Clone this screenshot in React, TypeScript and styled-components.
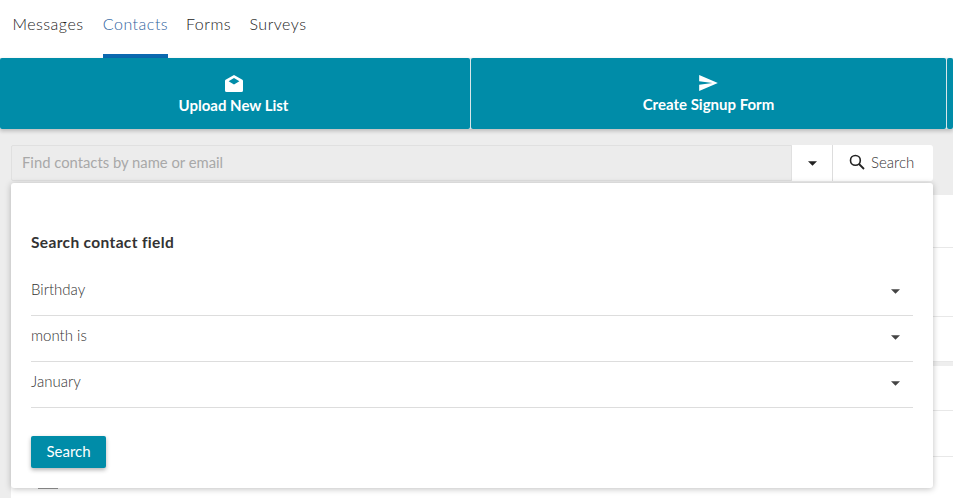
import React from 'react';
import styled, { createGlobalStyle } from 'styled-components';

const GlobalStyle = createGlobalStyle`
  html, body {
    margin: 0;
    padding: 0;
    height: 100%;
    overflow: hidden;
    background: #ededed;
  }

  * {
    box-sizing: border-box;
  }

  body {
    font-family: 'Lato', 'Noto Sans', sans-serif;
  }
`;

const tabs = [
  { label: 'Messages', width: 74 },
  { label: 'Contacts', width: 65 },
  { label: 'Forms', width: 45 },
  { label: 'Surveys', width: 58 },
];
const fields = ['Birthday', 'month is', 'January'];
const rowHeights = [53, 69, 45, 4, 45, 46, 42];

function Caret() {
  return (
    <svg width='9' height='5' viewBox='0 0 10 5'>
      <path d='M0 0h10L5 5z' fill='currentColor' />
    </svg>
  );
}

export default function App(): JSX.Element {
  return (
    <Page>
      <GlobalStyle />
      <Tabs>
        {tabs.map((tab) => (
          <Tab key={tab.label} $active={tab.label === 'Contacts'} $width={tab.width}>
            {tab.label}
          </Tab>
        ))}
      </Tabs>

      <Actions>
        <ActionCard $width={470} $inset={3}>
          <svg width='18' height='17' viewBox='0 0 18 17'>
            <path
              d='M9 0 .6 4.8Q0 5.2 0 6V15.4Q0 17 1.6 17H16.4Q18 17 18 15.4V6Q18 5.2 17.4 4.8zM9 3 14.4 6.2 9 9.6 3.6 6.2z'
              fill='#fff'
              fillRule='evenodd'
            />
          </svg>
          <ActionLabel>Upload New List</ActionLabel>
        </ActionCard>
        <ActionCard $width={475} $inset={0}>
          <svg width='19' height='16' viewBox='2 3 21 18'>
            <path d='M2.01 21 23 12 2.01 3 2 10l15 2-15 2z' fill='#fff' />
          </svg>
          <ActionLabel>Create Signup Form</ActionLabel>
        </ActionCard>
        <ActionCard $width={6} $inset={0} />
      </Actions>

      <Content>
        <SearchBar>
          <SearchInput>Find contacts by name or email</SearchInput>
          <CaretButton>
            <Caret />
          </CaretButton>
          <SearchButton>
            <svg width='16' height='16' viewBox='0 0 16 16'>
              <circle cx='6.4' cy='6.4' r='4.9' fill='none' stroke='#222' strokeWidth='1.6' />
              <path d='M10 10l5 5' stroke='#222' strokeWidth='1.8' />
            </svg>
            Search
          </SearchButton>
        </SearchBar>

        <Table>
          {rowHeights.map((height, index) => (
            <TableRow key={index} $height={height} $band={height === 4} />
          ))}
        </Table>

        <CheckboxPeek />

        <Popover>
          <PopoverTitle>Search contact field</PopoverTitle>
          {fields.map((field) => (
            <FieldSelect key={field}>
              {field}
              <FieldCaret>
                <Caret />
              </FieldCaret>
            </FieldSelect>
          ))}
          <PrimaryButton>Search</PrimaryButton>
        </Popover>
      </Content>
    </Page>
  );
}

const Page = styled.div`
  height: 498px;
  overflow: hidden;
  color: #333;
`;

const Tabs = styled.nav`
  display: flex;
  gap: 18px;
  height: 58px;
  padding-left: 11px;
  background: #fff;
`;

const Tab = styled.div<{ $active: boolean; $width: number }>`
  display: flex;
  justify-content: center;
  width: ${({ $width }) => $width}px;
  height: 58px;
  padding-top: 14px;
  font-size: 16px;
  line-height: 20px;
  font-weight: 300;
  letter-spacing: 0.5px;
  white-space: nowrap;
  color: ${({ $active }) => ($active ? '#2f64a0' : '#222')};
  border-bottom: 4px solid ${({ $active }) => ($active ? '#0b69b0' : 'transparent')};
`;

const Actions = styled.section`
  display: flex;
  gap: 1px;
  height: 71px;
  box-shadow: 0 2px 4px rgba(0, 0, 0, 0.22);
  background: #d7e6ea;
  position: relative;
`;

const ActionCard = styled.div<{ $width: number; $inset: number }>`
  display: flex;
  flex-direction: column;
  align-items: center;
  width: ${({ $width }) => $width}px;
  padding: 17px ${({ $inset }) => $inset}px 0 0;
  background: #008ca8;
  border-radius: 2px;
`;

const ActionLabel = styled.div`
  margin-top: 4px;
  font-size: 15px;
  line-height: 18px;
  font-weight: 700;
  color: #fff;
  white-space: nowrap;
`;

const Content = styled.main`
  position: relative;
  padding: 16px 0 0 11px;
`;

const SearchBar = styled.div`
  display: flex;
  width: 922px;
  height: 36px;
  font-size: 15px;
`;

const SearchInput = styled.div`
  flex: 1;
  display: flex;
  align-items: center;
  padding: 0 0 2px 10px;
  font-size: 14.8px;
  color: #a8a8a8;
  background: #ececec;
  border: 1px solid #e0e0e0;
  border-radius: 2px 0 0 2px;
`;

const CaretButton = styled.div`
  display: flex;
  align-items: center;
  justify-content: center;
  width: 41px;
  color: #222;
  background: #fff;
  border-right: 1px solid #ddd;
`;

const SearchButton = styled.div`
  display: flex;
  align-items: center;
  gap: 6px;
  width: 100px;
  padding: 0 0 2px 16px;
  font-weight: 300;
  color: #333;
  background: #fff;
  border-radius: 0 3px 3px 0;
`;

const Table = styled.div`
  margin-top: 14px;
  height: 303px;
  background: #fff;
`;

const TableRow = styled.div<{ $height: number; $band: boolean }>`
  height: ${({ $height }) => $height}px;
  background: ${({ $band }) => ($band ? '#eeeeee' : '#fff')};
  border-bottom: ${({ $band }) => ($band ? 'none' : '1px solid #e8e8e8')};
`;

const CheckboxPeek = styled.div`
  position: absolute;
  top: 358px;
  left: 38px;
  width: 20px;
  height: 3px;
  border-top: 2px solid #999;
`;

const Popover = styled.div`
  position: absolute;
  top: 54px;
  left: 11px;
  width: 922px;
  height: 305px;
  padding: 50px 20px 0;
  background: #fff;
  border-radius: 3px;
  box-shadow: 0 1px 6px rgba(0, 0, 0, 0.25);
`;

const PopoverTitle = styled.div`
  margin-bottom: 19px;
  font-size: 15.5px;
  line-height: 18px;
  font-weight: 700;
  letter-spacing: 0.35px;
  color: #333;
`;

const FieldSelect = styled.div`
  display: flex;
  align-items: center;
  justify-content: space-between;
  height: 46px;
  padding-bottom: 8px;
  font-size: 15px;
  font-weight: 300;
  color: #333;
  border-bottom: 1px solid #ddd;
`;

const FieldCaret = styled.span`
  display: flex;
  margin-right: 13px;
  margin-top: 6px;
  color: #444;
`;

const PrimaryButton = styled.div`
  display: flex;
  align-items: center;
  justify-content: center;
  width: 75px;
  height: 32px;
  margin-top: 28px;
  padding-bottom: 2px;
  font-size: 15px;
  color: #fff;
  background: #008ca8;
  border-radius: 2px;
  box-shadow: 0 2px 4px rgba(0, 0, 0, 0.3);
`;
